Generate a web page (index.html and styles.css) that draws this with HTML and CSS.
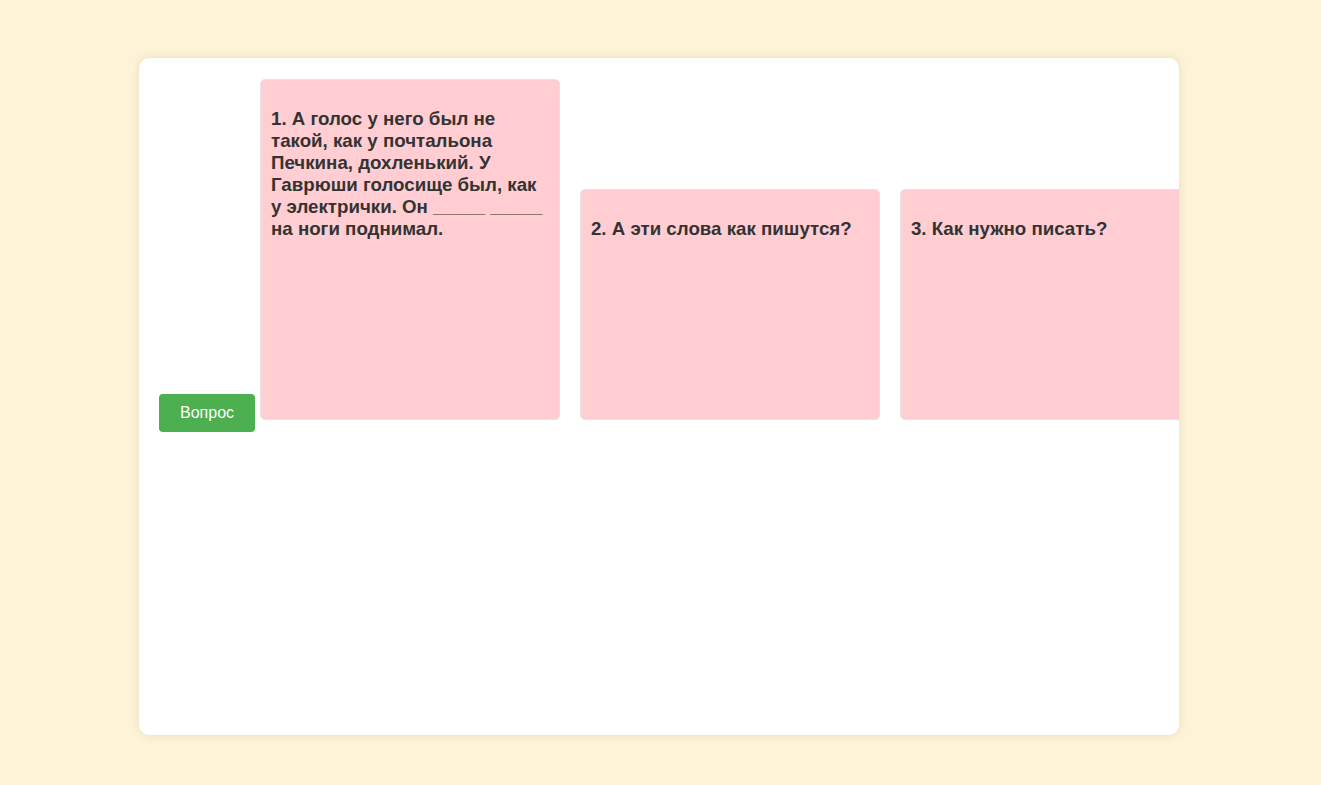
FILE: index.html
```html
<!DOCTYPE html>
<html lang="ru">
<head>
    <meta charset="UTF-8">
    <meta name="viewport" content="width=device-width, initial-scale=1.0">
    <title>Вопросы</title>
    <link rel="stylesheet" href="styles.css">
</head>
<body>
    <div class="board">
        <button class="ask">Вопрос</button>
        <div class="card">
            <h3>1. А голос у него был не такой, как у почтальона Печкина, дохленький. У Гаврюши голосище был, как у электрички. Он _____ _____ на ноги поднимал.</h3>
            <div class="answers"></div>
        </div>
        <div class="card">
            <h3>2. А эти слова как пишутся?</h3>
            <div class="answers"></div>
        </div>
        <div class="card">
            <h3>3. Как нужно писать?</h3>
            <div class="answers"></div>
        </div>
    </div>
</body>
</html>
```

FILE: styles.css
```css
body {
    font-family: "Liberation Sans", Arial, sans-serif;
    background-color: #fdf4d7;
    margin: 0;
    padding: 58px 0 50px;
}

.board {
    width: 1000px;
    margin: 0 auto 0 139px;
    padding: 21px 20px 19px;
    min-height: calc(100vh - 148px);
    background-color: #ffffff;
    border-radius: 10px;
    box-shadow: 0 0 10px rgba(0, 0, 0, 0.1);
    white-space: nowrap;
    overflow: hidden;
}

.ask {
    padding: 10px 21px;
    font-family: "Liberation Sans", Arial, sans-serif;
    font-size: 16px;
    line-height: 18px;
    color: white;
    background-color: #4caf50;
    border: none;
    border-radius: 4px;
    cursor: pointer;
    vertical-align: baseline;
}

.card {
    display: inline-block;
    box-sizing: border-box;
    width: 300px;
    margin: 0 15px -2px 0.5px;
    padding: 10px;
    background-color: #ffcdd2;
    border: 1px solid #e4e4e4;
    border-radius: 5px;
    white-space: normal;
    overflow: hidden;
    vertical-align: baseline;
}

.card h3 {
    margin: 18px 0;
    font-size: 18.72px;
    line-height: 22px;
    color: #333;
}

.answers {
    height: 151px;
}
```
